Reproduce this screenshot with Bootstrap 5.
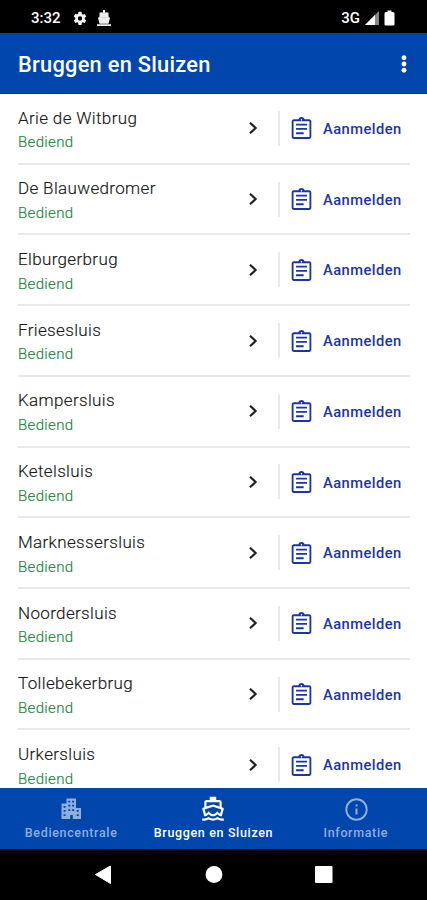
<!DOCTYPE html>
<html lang="nl">
<head>
<meta charset="utf-8">
<meta name="viewport" content="width=device-width, initial-scale=1">
<title>Bruggen en Sluizen</title>
<link href="https://cdn.jsdelivr.net/npm/bootstrap@5.3.0/dist/css/bootstrap.min.css" rel="stylesheet">
<style>
body { font-family: Roboto, "Noto Sans", sans-serif; background: #fff; line-height: 1; }
.phone { height: 900px; }
.status-bar { height: 33px; background: #000; padding: 3px 28px 0 31px; font-size: 15px; font-weight: 500; }
.network { font-size: 15px; }
.gear { margin-left: 11px; }
.app-bar { height: 61px; background: #0046ad; padding: 0 15px 0 18px; border-bottom: 1px solid #0a1fa0; }
.app-title { font-size: 21.8px; font-weight: 500; letter-spacing: .27px; padding-top: 5px; }
.lock-list { padding: 0 17px 0 18px; }
.lock-row { height: 70.72px; border-bottom: 2px solid #e9e9e9; }
.lock-name { font-size: 17px; line-height: 20px; letter-spacing: .35px; font-weight: 300; color: #111; margin-top: 13.5px; -webkit-text-stroke: .15px #222; }
.lock-state { font-size: 15px; line-height: 18px; letter-spacing: .35px; font-weight: 300; color: #178338; margin-top: 5.8px; -webkit-text-stroke: .15px #178338; }
.go { width: 31px; margin-right: 1px; }
.sign-up { width: 132px; height: 35px; border-left: 2px solid #e9e9e9; padding-left: 10px; color: #1c35a5; font-size: 14.7px; font-weight: 500; letter-spacing: .45px; }
.sign-up svg { margin-right: 10px; }
.sign-up span { padding-top: 2px; }
.tab-bar { height: 61px; background: #0046ad; }
.tab-item { color: #8eaede; font-size: 12.5px; font-weight: 500; letter-spacing: .65px; padding-top: 7px; }
.tab-item.current { color: #fff; }
.tab-item span { margin-top: 6px; }
.system-bar { height: 51px; background: #000; }
</style>
<script src="https://cdn.jsdelivr.net/npm/bootstrap@5.3.0/dist/js/bootstrap.bundle.min.js"></script>
</head>
<body>
<svg class="d-none">
<symbol id="i-go" viewBox="0 0 12 14"><path d="M3 1.800 8.600 7 3 12.200" fill="none" stroke="#222" stroke-width="2.200"/></symbol>
<symbol id="i-clip" viewBox="2 0 20 22"><path fill="currentColor" d="M7 15h7v1.700H7zm0-4h10v1.700H7zm0-4h10v1.700H7zm12-4h-4.180C14.400 1.840 13.300 1 12 1s-2.400.840-2.820 2H5c-1.100 0-2 .9-2 2v14c0 1.100.9 2 2 2h14c1.100 0 2-.9 2-2V5c0-1.100-.9-2-2-2zm-7-.2c.41 0 .75.34.75.75s-.34.75-.75.75-.75-.34-.75-.75.34-.75.75-.75zM19.300 19.300H4.700V4.700h14.600z"/></symbol>
</svg>
<div class="phone d-flex flex-column overflow-hidden">
<header class="status-bar d-flex align-items-center text-white flex-shrink-0">
<span>3:32</span>
<svg class="gear" width="16" height="17" viewBox="0 0 24 24" fill="#f4f4f4"><path d="M19.140 12.940a7 7 0 0 0 0-1.880l2.030-1.580a.5.5 0 0 0 .12-.61l-1.920-3.320a.5.5 0 0 0-.59-.22l-2.390.96a7 7 0 0 0-1.620-.94l-.36-2.540A.5.5 0 0 0 13.930 2h-3.860a.5.5 0 0 0-.47.410l-.36 2.540a7 7 0 0 0-1.620.94l-2.390-.96a.5.5 0 0 0-.59.22L2.720 8.870a.5.5 0 0 0 .12.61l2.030 1.580a7 7 0 0 0 0 1.880l-2.030 1.580a.5.5 0 0 0-.12.61l1.920 3.320c.12.22.37.29.59.22l2.390-.96c.5.38 1.030.7 1.620.94l.36 2.540c.05.24.24.41.48.41h3.840c.24 0 .44-.17.47-.41l.36-2.540a7 7 0 0 0 1.620-.94l2.390.96c.22.080.47 0 .59-.22l1.920-3.320a.5.5 0 0 0-.12-.61zM12 15.200a3.200 3.200 0 1 1 0-6.400 3.200 3.200 0 0 1 0 6.400z"/></svg>
<svg class="ms-2" width="16" height="17" viewBox="0 0 15 17" fill="#eee"><path d="M6.500 0h2v2.500H12v4L13.500 8 12 13.700H3L1.500 8 3 6.500v-4h3.500zM.5 14.300h14V16H.5z"/><path d="M4 7.500h7" stroke="#bbb" stroke-width=".5"/></svg>
<span class="network ms-auto">3G</span>
<svg class="ms-1" width="16" height="16" viewBox="0 0 16 16"><path d="M1 15 15 1v14z" fill="#888"/><path d="M1 15 11 5v10z" fill="#fff"/></svg>
<svg class="ms-1 me-1" width="11" height="16" viewBox="0 0 11 16"><path d="M3.500.5h4V2H9q1.500 0 1.500 1.500v11Q10.500 15.500 9 15.500H2Q.5 15.500.5 14.500v-11Q.5 2 2 2h1.500z" fill="#fff"/></svg>
</header>
<nav class="app-bar d-flex align-items-center justify-content-between text-white flex-shrink-0">
<h1 class="app-title m-0">Bruggen en Sluizen</h1>
<svg class="mt-1" width="16" height="20" viewBox="0 0 16 20" fill="#fff"><circle cx="8" cy="2.700" r="2.450"/><circle cx="8" cy="9" r="2.450"/><circle cx="8" cy="15.300" r="2.450"/></svg>
</nav>
<main class="lock-list flex-grow-1 overflow-hidden" id="locks"></main>
<nav class="tab-bar row g-0 flex-shrink-0 text-center">
<div class="tab-item col-4 d-flex flex-column align-items-center"><svg width="24" height="26" viewBox="0 0 24 26"><path fill="currentColor" fill-rule="evenodd" d="M7.500 3.500H17V13h5v11h-8.200v-4h-2.600v4H2.500V8.500h5zM9.300 5.700v1.700h2V5.700zm3.800 0v1.700h2V5.700zM9.300 9.800v1.700h2V9.800zm3.800 0v1.700h2V9.800zM4.600 11v1.700h2V11zm0 4v1.700h2V15zm0 4.200v1.700h2v-1.700zm4.700-5v1.700h2v-1.700zm3.800 0v1.700h2v-1.700zm4.600.8v1.700h2V15zm0 4.200v1.700h2v-1.700z"/></svg><span>Bediencentrale</span></div>
<div class="tab-item current col-4 d-flex flex-column align-items-center"><svg width="26" height="26" viewBox="0 -.7 24 24"><path fill="currentColor" d="M20 21c-1.390 0-2.780-.47-4-1.320a7 7 0 0 1-8 0C6.780 20.530 5.390 21 4 21H2v2h2c1.380 0 2.740-.35 4-.99a9 9 0 0 0 8 0c1.260.65 2.620.99 4 .99h2v-2zM3.950 19H4c1.600 0 3.020-.88 4-2 .98 1.120 2.400 2 4 2s3.020-.88 4-2c.98 1.120 2.400 2 4 2h.05l1.890-6.680c.11-.37-.07-.9-.66-1.280L20 10.620V6c0-1.100-.9-2-2-2h-3V1H9v3H6c-1.100 0-2 .9-2 2v4.620l-1.290.42c-.63.19-.81.84-.66 1.280zM6 6h12v3.970L12 8 6 9.970zM12 10.100l7.700 2.600-1.100 3.800c-1.100-.3-1.700-1-2.600-2.100-1.900 2.200-2.700 2.600-4 2.600s-2.100-.4-4-2.600c-.9 1.100-1.500 1.800-2.600 2.100l-1.100-3.800z" fill-rule="evenodd"/></svg><span>Bruggen en Sluizen</span></div>
<div class="tab-item col-4 d-flex flex-column align-items-center"><svg width="26" height="26" viewBox="0 0 26 26"><circle cx="13.500" cy="14.500" r="10.200" fill="none" stroke="currentColor" stroke-width="1.900"/><path fill="currentColor" d="M12.500 9.500h2v2h-2zm0 4h2v6h-2z"/></svg><span>Informatie</span></div>
</nav>
<footer class="system-bar flex-shrink-0 d-flex justify-content-center align-items-center">
<svg width="427" height="51" viewBox="0 0 427 51" fill="#fff"><path d="M110.500 17v17.500L95.500 25.500z" stroke="#fff" stroke-linejoin="round"/><circle cx="214" cy="25.500" r="8.400"/><rect x="315" y="17" width="17.500" height="17" rx="1"/></svg>
</footer>
</div>
<script>
const names = ["Arie de Witbrug", "De Blauwedromer", "Elburgerbrug", "Friesesluis", "Kampersluis", "Ketelsluis", "Marknessersluis", "Noordersluis", "Tollebekerbrug", "Urkersluis"];
document.getElementById("locks").innerHTML = names.map(n => `
<div class="lock-row d-flex align-items-center">
<div class="flex-grow-1 align-self-start"><div class="lock-name">${n}</div><div class="lock-state">Bediend</div></div>
<svg class="go" height="14"><use href="#i-go" x="1" width="12" height="14"/></svg>
<div class="sign-up d-flex align-items-center"><svg width="23" height="24"><use href="#i-clip"/></svg><span>Aanmelden</span></div>
</div>`).join("");
</script>
</body>
</html>
